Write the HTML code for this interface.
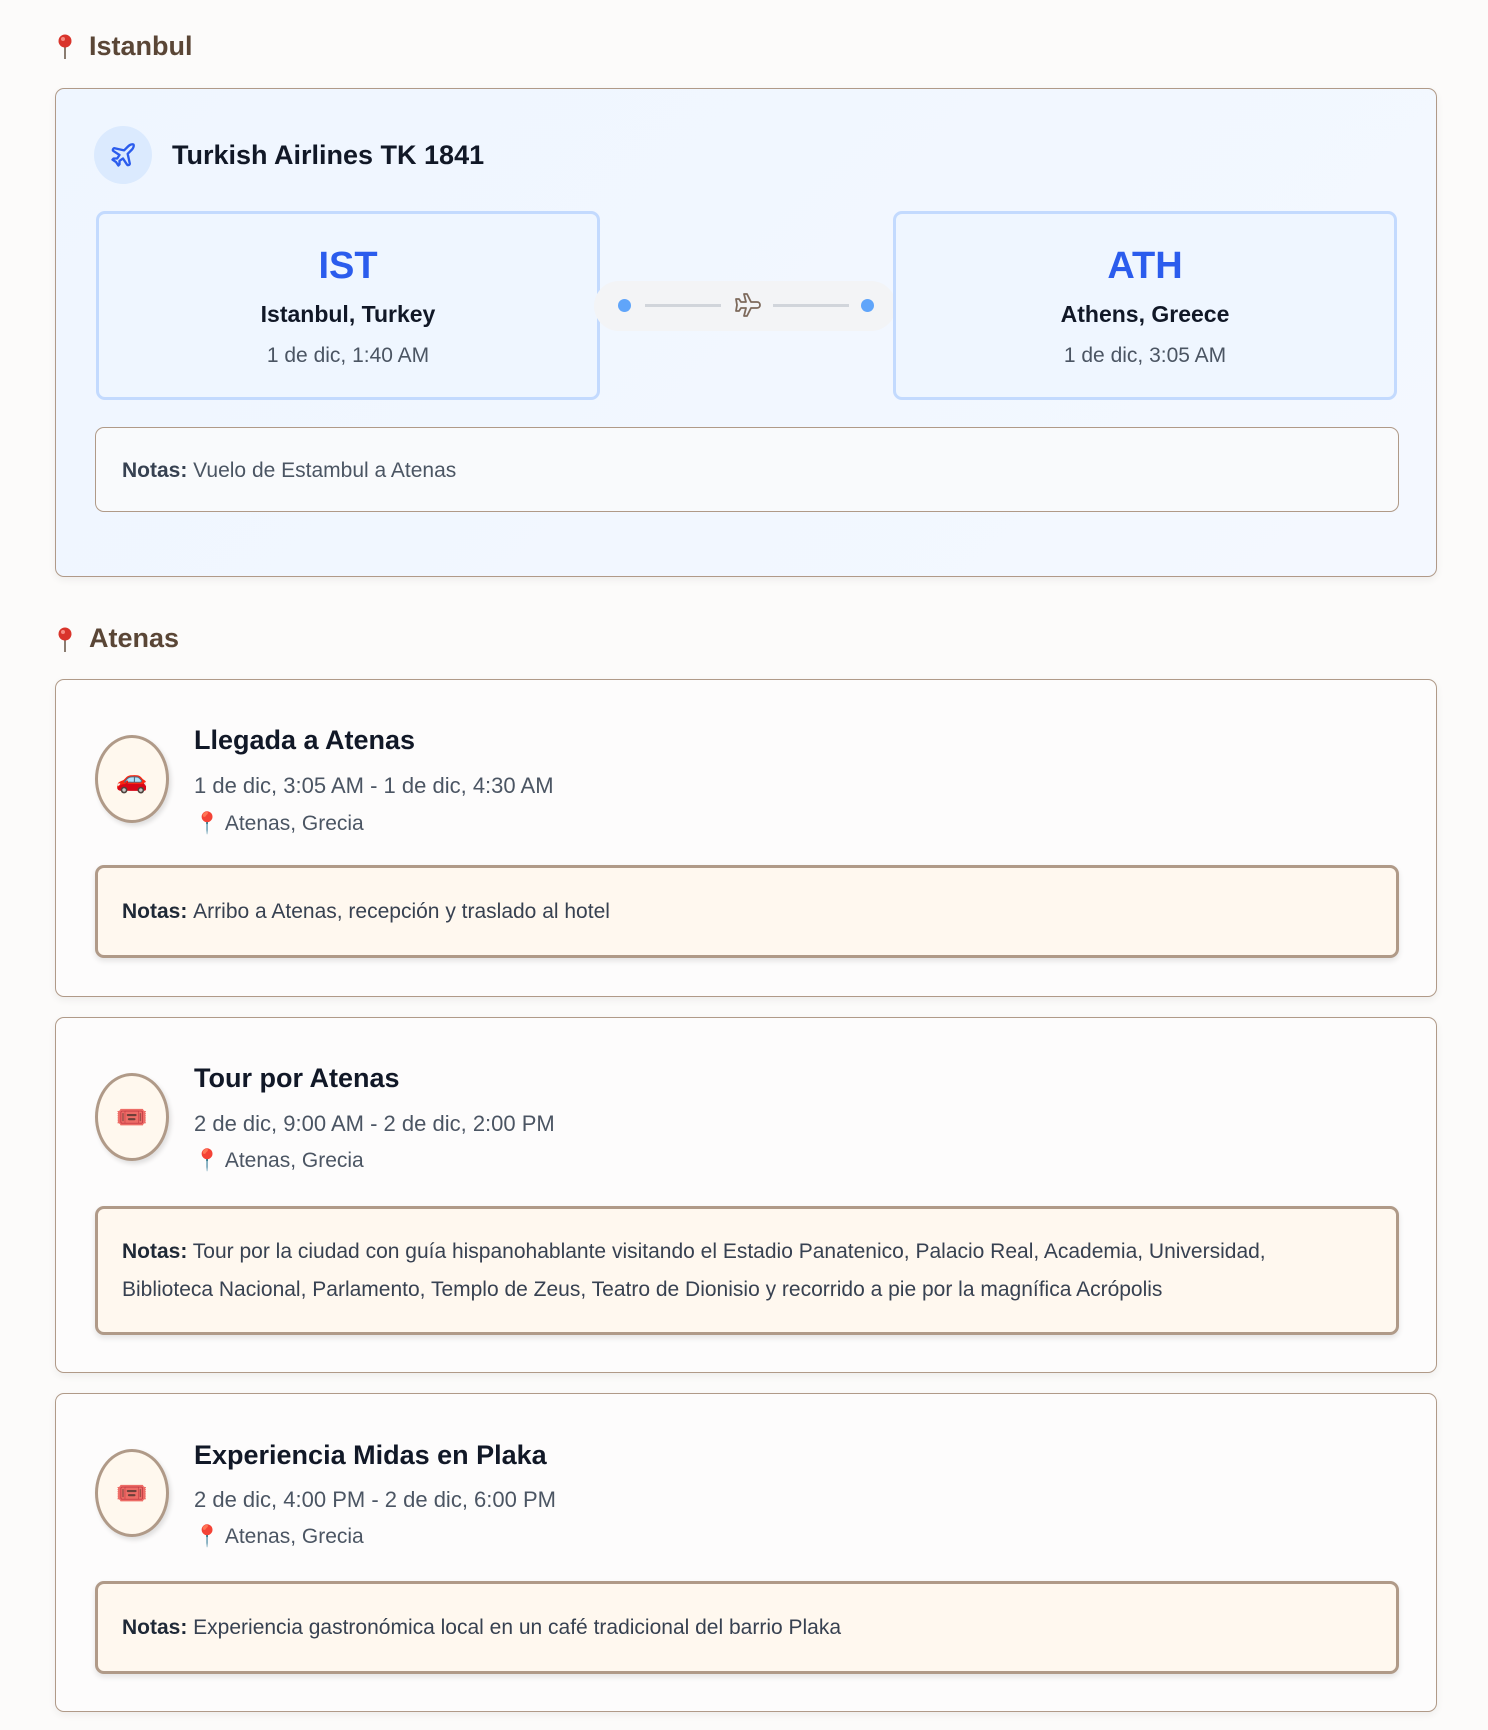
<!DOCTYPE html>
<html><head><meta charset="utf-8"><style>
*{box-sizing:border-box;margin:0;padding:0}
body{width:1488px;height:1730px;background:#fcfbfa;font-family:"Liberation Sans",sans-serif;position:relative;overflow:hidden;color:#111827}
.a{position:absolute}
.h{font-size:27px;font-weight:bold;color:#5a4636;left:89px}
.card{position:absolute;left:55px;width:1382px;border:1px solid #b09a88;border-radius:9px;background:#fdfcfc;box-shadow:0 3px 8px rgba(0,0,0,0.06)}
.box{position:absolute;top:122px;width:504px;height:189px;border:3px solid #c3dafe;border-radius:9px;background:#eff6ff;text-align:center}
.code{font-size:38px;font-weight:bold;color:#2b5ced;margin-top:30px;line-height:44px}
.city{font-size:23px;font-weight:bold;color:#111827;margin-top:12px;line-height:28px}
.time{font-size:21px;color:#4b5563;margin-top:16px;line-height:24px}
.ic{position:absolute;left:39px;width:74px;height:88px;border:3px solid #b09a88;border-radius:50%;background:#fff8ee;box-shadow:2px 3px 5px rgba(0,0,0,0.12);display:flex;align-items:center;justify-content:center;font-size:26px}
.t{position:absolute;left:138px;font-size:27px;font-weight:bold;color:#111827;white-space:nowrap}
.d{position:absolute;left:138px;font-size:22px;color:#4b5563;white-space:nowrap}
.l{position:absolute;left:138px;font-size:21px;color:#4b5563;white-space:nowrap}
.n{position:absolute;left:39px;width:1304px;border:3px solid #b09a88;border-radius:9px;background:#fff8ef;box-shadow:0 3px 6px rgba(0,0,0,0.1);font-size:21px;color:#374151;padding:0 24px;display:flex;align-items:center;white-space:nowrap;line-height:38px}
.n b{color:#1f2937}
</style></head><body>
<svg class="a" style="left:58px;top:33px" width="14" height="28" viewBox="0 0 14 28"><rect x="6" y="10" width="2" height="16" fill="#8a7c70"/><circle cx="7" cy="8" r="6.5" fill="#d9342b"/><circle cx="5" cy="6" r="2" fill="#f58a80"/></svg>
<div class="a h" style="top:31px">Istanbul</div>

<div class="card" style="top:88px;height:489px;background:linear-gradient(135deg,#eff6ff,#f4f8ff)">
  <div class="a" style="left:38px;top:37px;width:58px;height:58px;border-radius:50%;background:#dbeafe"></div>
  <svg class="a" style="left:53px;top:52px" width="28" height="28" viewBox="0 0 24 24" fill="none" stroke="#2b5ced" stroke-width="2" stroke-linejoin="round" stroke-linecap="round"><path d="M17.8 19.2 16 11l3.5-3.5C21 6 21.5 4 21 3c-1-.5-3 0-4.5 1.5L13 8 4.8 6.2c-.5-.1-.9.1-1.1.5l-.3.5c-.2.5-.1 1 .3 1.3L9 12l-2 3H4l-1 1 3 2 2 3 1-1v-3l3-2 3.5 5.3c.3.4.8.5 1.3.3l.5-.2c.4-.3.6-.7.5-1.2z"/></svg>
  <div class="a" style="left:116px;top:51px;font-size:27px;font-weight:bold;color:#111827">Turkish Airlines TK 1841</div>
  <div class="box" style="left:40px"><div class="code">IST</div><div class="city">Istanbul, Turkey</div><div class="time">1 de dic, 1:40 AM</div></div>
  <div class="a" style="left:538px;top:192px;width:302px;height:50px;border-radius:25px;background:#f3f4f6"></div>
  <div class="a" style="left:562px;top:210px;width:13px;height:13px;border-radius:50%;background:#60a5fa"></div>
  <div class="a" style="left:589px;top:215px;width:76px;height:3px;background:#d1d5db"></div>
  <div class="a" style="left:717px;top:215px;width:76px;height:3px;background:#d1d5db"></div>
  <div class="a" style="left:805px;top:210px;width:13px;height:13px;border-radius:50%;background:#60a5fa"></div>
  <svg class="a" style="left:677px;top:203px" width="28" height="26" viewBox="0 0 28 26" fill="none" stroke="#7d6a5c" stroke-width="1.8" stroke-linejoin="round"><path d="M11 2h3l4 8h6c2 0 3 1.5 3 3s-1 3-3 3h-6l-4 8h-3l2-8H8l-2 3H3l1-6-1-6h3l2 3h5z"/></svg>
  <div class="box" style="left:837px"><div class="code">ATH</div><div class="city">Athens, Greece</div><div class="time">1 de dic, 3:05 AM</div></div>
  <div class="a" style="left:39px;top:338px;width:1304px;height:85px;border:1px solid #b09a88;border-radius:9px;background:#f9fafc;font-size:21px;color:#4b5563;padding-left:26px;line-height:86px"><b style="color:#374151">Notas:</b> Vuelo de Estambul a Atenas</div>
</div>

<svg class="a" style="left:58px;top:626px" width="14" height="28" viewBox="0 0 14 28"><rect x="6" y="10" width="2" height="16" fill="#8a7c70"/><circle cx="7" cy="8" r="6.5" fill="#d9342b"/><circle cx="5" cy="6" r="2" fill="#f58a80"/></svg>
<div class="a h" style="top:623px">Atenas</div>

<div class="card" style="top:679px;height:318px">
  <div class="ic" style="top:55px">🚗</div>
  <div class="t" style="top:45px">Llegada a Atenas</div>
  <div class="d" style="top:93px">1 de dic, 3:05 AM - 1 de dic, 4:30 AM</div>
  <div class="l" style="top:132px">📍 Atenas, Grecia</div>
  <div class="n" style="top:185px;height:93px"><b>Notas:</b>&nbsp;Arribo a Atenas, recepción y traslado al hotel</div>
</div>

<div class="card" style="top:1017px;height:356px">
  <div class="ic" style="top:55px">🎟️</div>
  <div class="t" style="top:45px">Tour por Atenas</div>
  <div class="d" style="top:93px">2 de dic, 9:00 AM - 2 de dic, 2:00 PM</div>
  <div class="l" style="top:131px">📍 Atenas, Grecia</div>
  <div class="n" style="top:188px;height:129px;display:block;padding-top:24px"><b>Notas:</b> Tour por la ciudad con guía hispanohablante visitando el Estadio Panatenico, Palacio Real, Academia, Universidad,<br>Biblioteca Nacional, Parlamento, Templo de Zeus, Teatro de Dionisio y recorrido a pie por la magnífica Acrópolis</div>
</div>

<div class="card" style="top:1393px;height:319px">
  <div class="ic" style="top:55px">🎟️</div>
  <div class="t" style="top:46px">Experiencia Midas en Plaka</div>
  <div class="d" style="top:93px">2 de dic, 4:00 PM - 2 de dic, 6:00 PM</div>
  <div class="l" style="top:131px">📍 Atenas, Grecia</div>
  <div class="n" style="top:187px;height:93px"><b>Notas:</b>&nbsp;Experiencia gastronómica local en un café tradicional del barrio Plaka</div>
</div>
</body></html>
